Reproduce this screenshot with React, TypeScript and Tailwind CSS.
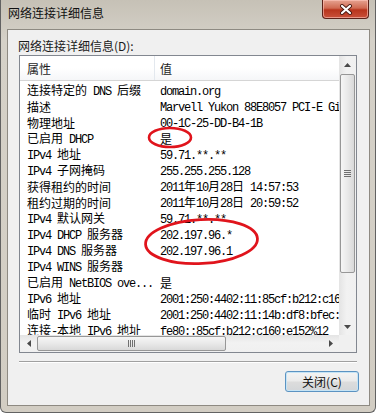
import React from 'react';

const rows: [string, string][] = [
  ['连接特定的 DNS 后缀', 'domain.org'],
  ['描述', 'Marvell Yukon 88E8057 PCI-E Gigabit Ethernet Controller'],
  ['物理地址', '00-1C-25-DD-B4-1B'],
  ['已启用 DHCP', '是'],
  ['IPv4 地址', '59.71.**.**'],
  ['IPv4 子网掩码', '255.255.255.128'],
  ['获得租约的时间', '2011年10月28日 14:57:53'],
  ['租约过期的时间', '2011年10月28日 20:59:52'],
  ['IPv4 默认网关', '59.71.**.**'],
  ['IPv4 DHCP 服务器', '202.197.96.*'],
  ['IPv4 DNS 服务器', '202.197.96.1'],
  ['IPv4 WINS 服务器', ''],
  ['已启用 NetBIOS ove...', '是'],
  ['IPv6 地址', '2001:250:4402:11:85cf:b212:c160:e152'],
  ['临时 IPv6 地址', '2001:250:4402:11:14b:df8:bfec:8a21'],
  ['连接-本地 IPv6 地址', 'fe80::85cf:b212:c160:e152%12'],
];

// SimSun-like mixed text: CJK at 12px, ASCII at 6px per char
const Mixed = ({ s }: { s: string }) => {
  const parts = s.split(/([\u0000-\u007f]+)/).filter(Boolean);
  return (
    <>
      {parts.map((p, i) =>
        /^[\u0000-\u007f]+$/.test(p) ? (
          <span key={i} className="font-['Liberation_Mono',monospace] text-[12px] leading-[16px] tracking-[-1.2px]">
            {p}
          </span>
        ) : (
          <span key={i} className="font-['Noto_Sans_CJK_SC',sans-serif] text-[12px] leading-[16px]">
            {p}
          </span>
        )
      )}
    </>
  );
};

const Arrow = ({ dir }: { dir: 'up' | 'down' | 'left' | 'right' }) => {
  const pts = {
    up: '0,4 3.5,0 7,4',
    down: '0,0 3.5,4 7,0',
    left: '4,0 0,3.5 4,7',
    right: '0,0 4,3.5 0,7',
  }[dir];
  const vertical = dir === 'up' || dir === 'down';
  return (
    <svg width={vertical ? 7 : 4} height={vertical ? 4 : 7} viewBox={vertical ? '0 0 7 4' : '0 0 4 7'}>
      <polygon points={pts} fill="#4a4a4a" />
    </svg>
  );
};

const VScroll = () => (
  <div className="flex flex-col bg-[linear-gradient(to_right,#e4e4e4,#f2f2f2_45%,#f0f0f0)]">
    <div className="h-[17px] flex items-center justify-center">
      <Arrow dir="up" />
    </div>
    <div className="flex-1 px-px">
      <div className="mt-px h-[199px] rounded-[2px] border border-[#979797] bg-[linear-gradient(to_right,#f6f6f6,#e9e9e9_50%,#d9d9d9)] flex flex-col items-center justify-center gap-px">
        <div className="w-[7px] h-px bg-[#707070]" />
        <div className="w-[7px] h-px bg-[#707070]" />
        <div className="w-[7px] h-px bg-[#707070]" />
        <div className="w-[7px] h-px bg-[#707070]" />
      </div>
    </div>
    <div className="h-[17px] flex items-center justify-center">
      <Arrow dir="down" />
    </div>
  </div>
);

const HScroll = () => (
  <div className="flex bg-[linear-gradient(to_bottom,#e4e4e4,#f2f2f2_45%,#f0f0f0)]">
    <div className="w-[17px] flex items-center justify-center">
      <Arrow dir="left" />
    </div>
    <div className="flex-1 py-px">
      <div className="w-[189px] h-full rounded-[2px] border border-[#979797] bg-[linear-gradient(to_bottom,#f6f6f6,#e9e9e9_50%,#d9d9d9)] flex items-center justify-center gap-px">
        <div className="h-[7px] w-px bg-[#707070]" />
        <div className="h-[7px] w-px bg-[#707070]" />
        <div className="h-[7px] w-px bg-[#707070]" />
        <div className="h-[7px] w-px bg-[#707070]" />
      </div>
    </div>
    <div className="w-[17px] flex items-center justify-center">
      <Arrow dir="right" />
    </div>
  </div>
);

const App = () => {
  return (
    <div className="w-[376px] h-[413px] relative overflow-hidden rounded-b-[6px] border-x border-b border-[#626262] bg-[linear-gradient(to_bottom,#c6c1b6,#d5d1c8_40px,#d2cdc3)] text-black">
      {/* Title bar */}
      <div className="h-[29px] flex items-start justify-between pl-[7px] pr-[6px]">
        <span className="mt-[5px] text-[12px] leading-[16px] text-[#111] font-['Noto_Sans_CJK_SC',sans-serif]">
          网络连接详细信息
        </span>
        <div className="w-[47px] h-[19px] rounded-b-[4px] border border-t-0 border-[#5c2219] bg-[linear-gradient(to_bottom,#e6a391,#d06a52_45%,#b8341c_55%,#c9513a)] shadow-[inset_0_0_0_1px_rgba(255,200,190,0.6)] flex items-center justify-center">
          <svg width="14" height="11" viewBox="0 0 14 11">
            <path d="M3 2 L11 9 M11 2 L3 9" stroke="#4a1a12" strokeWidth="4" strokeLinecap="round" />
            <path d="M3 2 L11 9 M11 2 L3 9" stroke="#ffffff" strokeWidth="2.2" strokeLinecap="round" />
          </svg>
        </div>
      </div>

      {/* Client area */}
      <div className="ml-[6px] w-[363px] h-[377px] border border-[#8e8a82] bg-[#f0f0f0] pt-[8px] pl-[11px]">
        <div className="-ml-px h-[16px] leading-[16px] text-[12px] text-[#1a1a1a] font-['Noto_Sans_CJK_SC',sans-serif]">
          网络连接详细信息(D):
        </div>

        <div className="mt-px w-[338px] h-[298px] border border-[#828790] bg-white grid grid-cols-[1fr_17px] grid-rows-[1fr_17px]">
          <div className="overflow-hidden">
            <div className="h-[25px] flex border-b border-[#d5d5d5] bg-[linear-gradient(to_bottom,#ffffff,#ffffff_50%,#f5f6f8)] text-[12px] text-[#1e1e1e] font-['Noto_Sans_CJK_SC',sans-serif]">
              <div className="w-[135px] shrink-0 pl-[7px] pt-[2px] flex items-center border-r border-[#e3e8ee]">属性</div>
              <div className="pl-[5px] pt-[2px] flex items-center">值</div>
            </div>
            <div className="pt-px">
              {rows.map(([k, v], i) => (
                <div key={i} className="h-[16px] flex items-center whitespace-pre leading-[16px]">
                  <div className="w-[135px] shrink-0 pl-[7px] overflow-hidden">
                    <Mixed s={k} />
                  </div>
                  <div className="pl-[5px] whitespace-pre">
                    <Mixed s={v} />
                  </div>
                </div>
              ))}
            </div>
          </div>
          <VScroll />
          <HScroll />
          <div className="bg-[#f0f0f0]" />
        </div>

        <div className="mt-[8px] w-[338px] border-t border-b border-t-[#a0a0a0] border-b-white" />

        <div className="mt-[8px] w-[340px] flex justify-end">
          <div className="w-[74px] h-[21px] rounded-[3px] border border-[#5b93c2] bg-[linear-gradient(to_bottom,#f4f4f4,#ebebeb_45%,#dcdcdc_55%,#d3d6d9)] shadow-[inset_0_0_0_1px_#c6e4f5] flex items-center justify-center text-[12px] text-[#111] font-['Noto_Sans_CJK_SC',sans-serif]">
            关闭(C)
          </div>
        </div>
      </div>

      {/* Red hand-drawn marks */}
      <svg className="absolute inset-0 pointer-events-none" width="376" height="413" viewBox="0 0 376 413">
        <ellipse cx="169" cy="137.5" rx="21" ry="9.5" fill="none" stroke="#e0141c" strokeWidth="2.6" />
        <ellipse cx="200.5" cy="241.5" rx="56" ry="22" fill="none" stroke="#e0141c" strokeWidth="2.8" transform="rotate(-3 200.5 241.5)" />
      </svg>
    </div>
  );
};

export default App;
